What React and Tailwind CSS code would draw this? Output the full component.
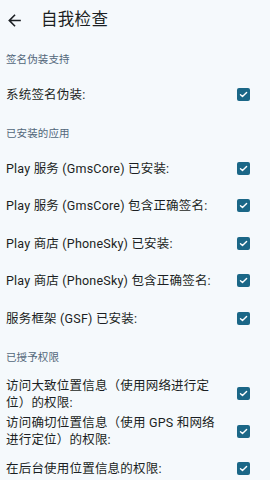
import React from 'react';

const sections = [
  {
    title: '签名伪装支持',
    items: ['系统签名伪装:'],
  },
  {
    title: '已安装的应用',
    items: [
      'Play 服务 (GmsCore) 已安装:',
      'Play 服务 (GmsCore) 包含正确签名:',
      'Play 商店 (PhoneSky) 已安装:',
      'Play 商店 (PhoneSky) 包含正确签名:',
      '服务框架 (GSF) 已安装:',
    ],
  },
  {
    title: '已授予权限',
    items: [
      '访问大致位置信息（使用网络进行定位）的权限:',
      '访问确切位置信息（使用 GPS 和网络进行定位）的权限:',
      '在后台使用位置信息的权限:',
    ],
  },
];

// checked box, material style
const CheckBox = () => (
  <div className="w-[13px] h-[13px] rounded-[2px] bg-[#1b6787] flex items-center justify-center shrink-0">
    <svg width="9" height="9" viewBox="0 0 9 9" fill="none">
      <polyline points="1.5,4.7 3.5,6.6 7.6,2.5" stroke="white" strokeWidth="1.4" strokeLinecap="round" strokeLinejoin="round" />
    </svg>
  </div>
);

export default function App() {
  return (
    <div className="w-[270px] h-[480px] overflow-hidden bg-[#f5f9fc] text-[#1b1f23] font-['Roboto','Noto_Sans_CJK_SC',sans-serif]">
      {/* Toolbar */}
      <div className="h-[40px] flex items-center pl-[5px]">
        <svg width="19" height="19" viewBox="0 0 24 24" className="text-[#1b1f23]">
          <path fill="currentColor" d="M20 11H7.83l5.59-5.59L12 4l-8 8 8 8 1.41-1.41L7.83 13H20v-2z" />
        </svg>
        <span className="ml-[17px] text-[16.5px] leading-none tracking-[0.3px]">自我检查</span>
      </div>

      {sections.map((s, si) => (
        <div key={s.title}>
          <div className={`${si === 2 ? 'h-[38px]' : 'h-[36px]'} flex items-center pt-[4px] pl-[6px] text-[10.5px] tracking-[0.1px] text-[#52677a]`}>
            {s.title}
          </div>
          {s.items.map((item) => (
            <div key={item} className="h-[37.5px] flex items-center pl-[6px] pr-[20px]">
              <div className="flex-1 pr-[18px] text-[12.5px] leading-[17px] tracking-[0.2px]">{item}</div>
              <CheckBox />
            </div>
          ))}
        </div>
      ))}
    </div>
  );
}
